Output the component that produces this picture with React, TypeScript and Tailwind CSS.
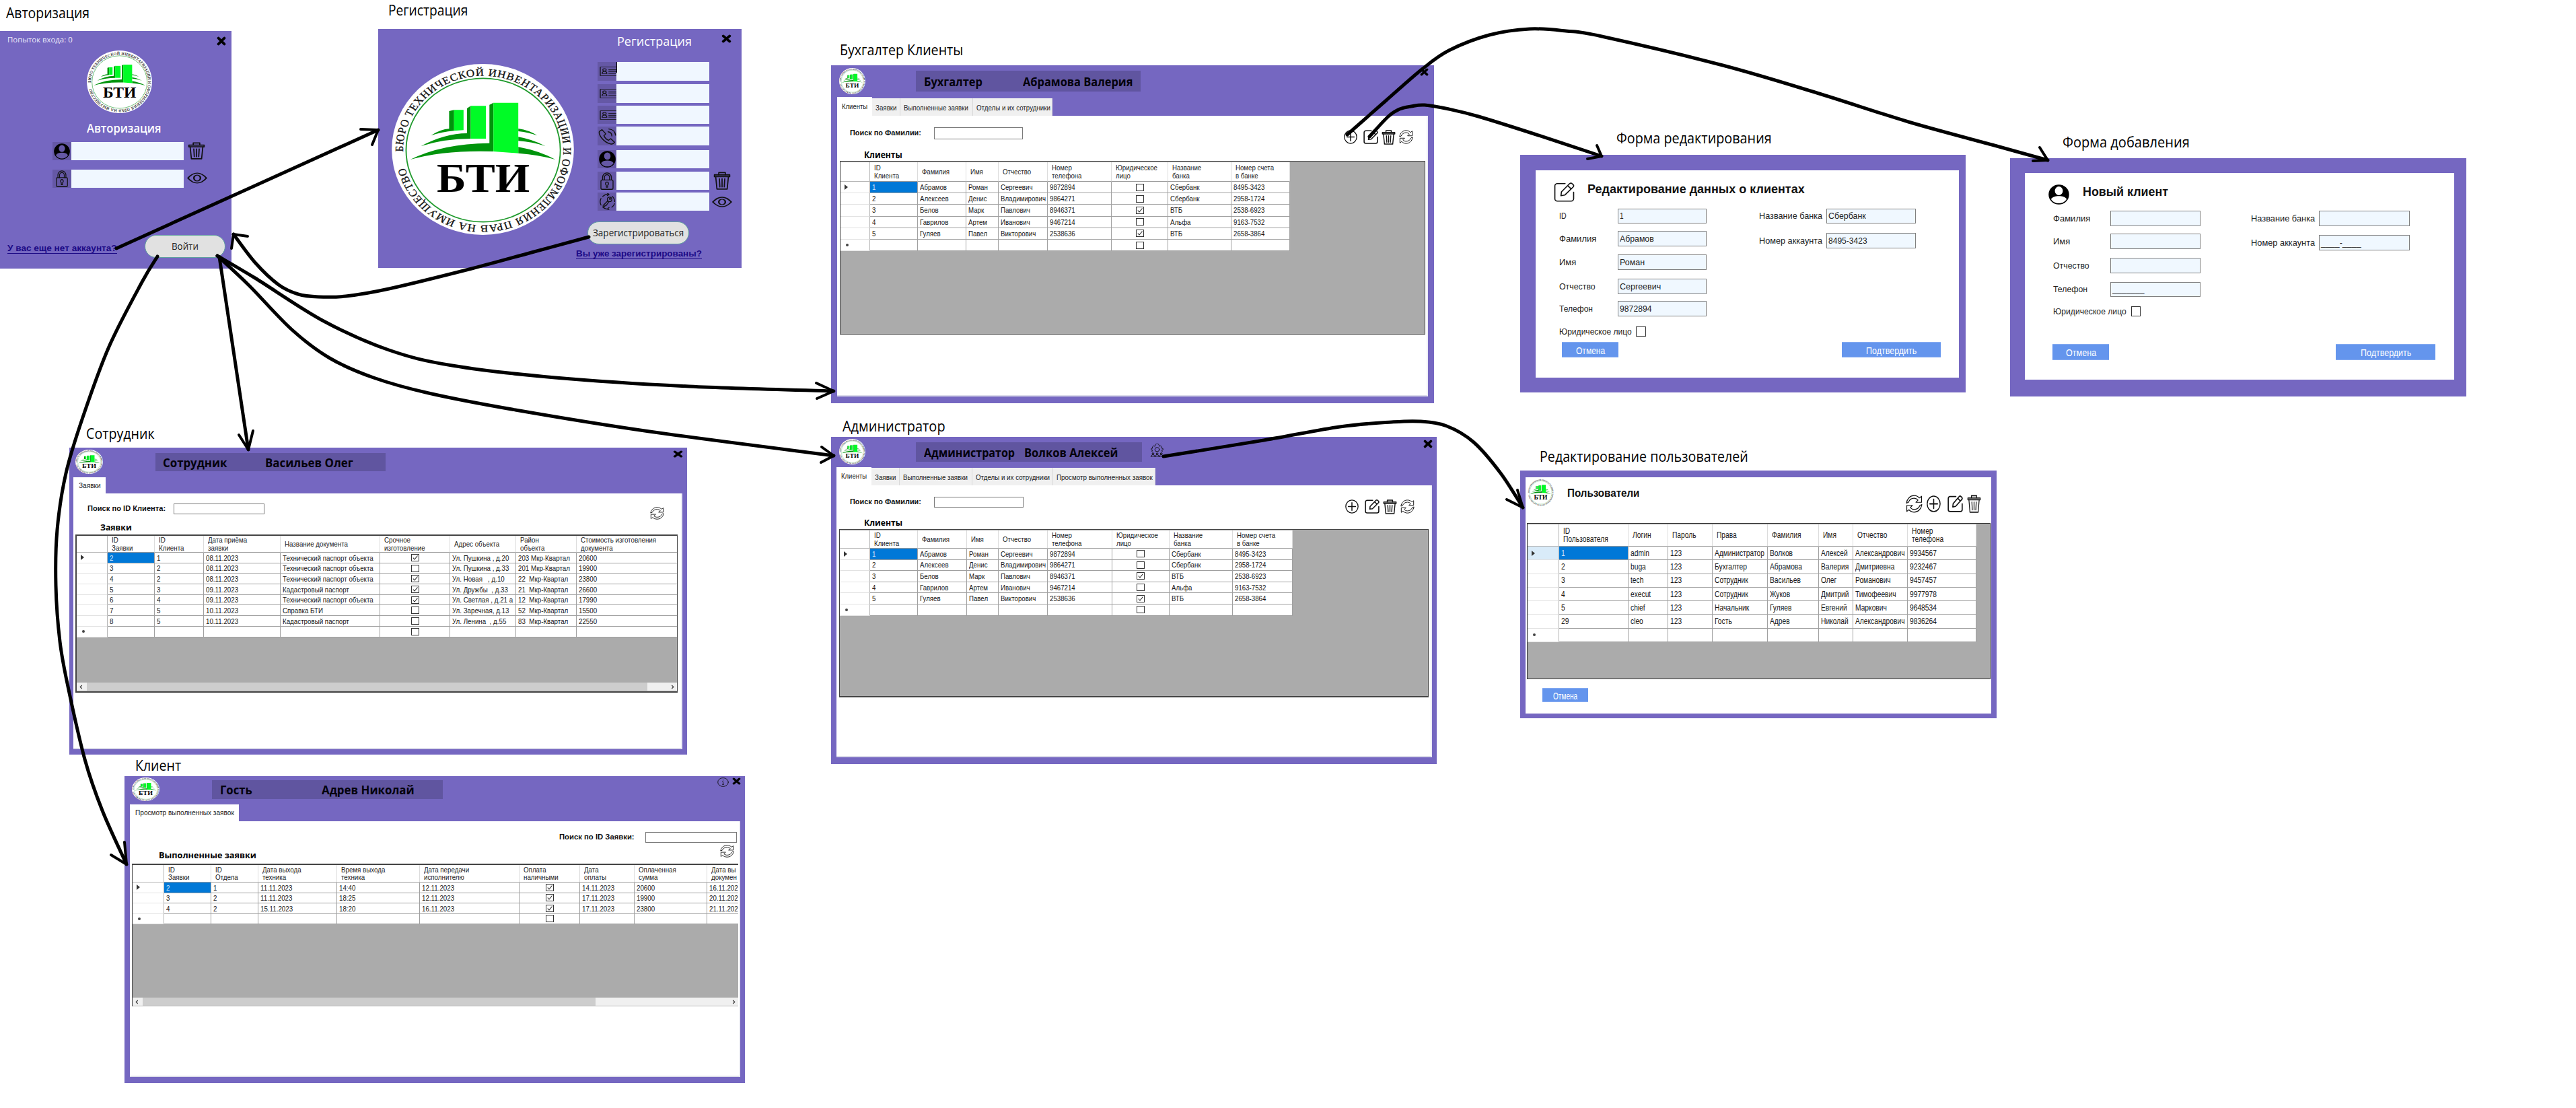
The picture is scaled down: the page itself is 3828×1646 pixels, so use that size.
import React, { useLayoutEffect, useRef, useState } from 'react';

/* ---------- text ---------- */

// Renders a line of text condensed or widened to an exact width.
function Fit({ w, className = '', children }: { w: number; className?: string; children: string }) {
  const ref = useRef<HTMLSpanElement>(null);
  const [scale, setScale] = useState(1);
  useLayoutEffect(() => {
    const el = ref.current;
    if (el && el.offsetWidth) setScale(w / el.offsetWidth);
  }, [w]);
  return (
    <span className={`block shrink-0 leading-none ${className}`} style={{ width: w }}>
      <span ref={ref} className="inline-block origin-left whitespace-pre" style={{ transform: `scaleX(${scale})` }}>
        {children}
      </span>
    </span>
  );
}

/* ---------- icons ---------- */

type IconProps = { className?: string; sw?: number };

const Svg = ({ className = '', sw = 1.6, children }: IconProps & { children: React.ReactNode }) => (
  <svg
    viewBox="0 0 24 24"
    preserveAspectRatio="none"
    fill="none"
    stroke="#111"
    strokeWidth={sw}
    strokeLinecap="round"
    strokeLinejoin="round"
    className={`block shrink-0 ${className}`}
  >
    {children}
  </svg>
);

const CloseIcon = ({ className }: IconProps) => (
  <Svg className={className} sw={6.5}>
    <path d="M4.500 4.500 19.500 19.500M19.500 4.500 4.500 19.500" stroke="#000" />
  </Svg>
);

const UserIcon = ({ className }: IconProps) => (
  <Svg className={className} sw={1.2}>
    <circle cx="12" cy="12" r="11.200" fill="#000" stroke="#000" />
    <ellipse cx="12" cy="7.600" rx="4.600" ry="5.200" fill="currentColor" stroke="none" />
    <path d="M3 17.400C5 14.600 8 13.800 12 13.800s7 .8 9 3.600c-2 3.400-5.200 5-9 5s-7-1.600-9-5z" fill="currentColor" stroke="none" />
  </Svg>
);

const LockIcon = ({ className }: IconProps) => (
  <Svg className={className} sw={1.3}>
    <rect x="3" y="10.500" width="18" height="12.800" rx="1.500" />
    <path d="M5.500 10.500V7a6.500 6.200 0 0 1 13 0v3.500M8.200 10.500V7a3.800 3.800 0 0 1 7.600 0v3.500" />
    <path d="M11 17.600a2.300 2.300 0 1 1 2 0v2.800h-2z" />
  </Svg>
);

const TrashIcon = ({ className, sw = 1.6, lid = 'none' }: IconProps & { lid?: string }) => (
  <Svg className={className} sw={sw}>
    <path d="M1.500 4.200h21v2.400h-21z" fill={lid} />
    <path d="M7.500 4V1.200h9V4M3.300 6.800 5 23h14l1.700-16.200M8.300 9.500l.7 10.500M12 9.500V20M15.700 9.500 15 20" />
  </Svg>
);

const EyeIcon = ({ className }: IconProps) => (
  <Svg className={className} sw={1.9}>
    <path d="M1 12C4.500 5 8 1.500 12 1.500S19.500 5 23 12c-3.500 7-7 10.500-11 10.500S4.500 19 1 12z" />
    <ellipse cx="12" cy="12" rx="3.900" ry="6.200" />
  </Svg>
);

const CardIcon = ({ className }: IconProps) => (
  <Svg className={className} sw={1.2}>
    <path d="M23.500 3.500H1v17h22.500" />
    <circle cx="7" cy="9" r="2.400" />
    <path d="M3.600 16.500c0-3 1.400-4.500 3.400-4.500s3.400 1.500 3.400 4.500zM13 9h10.500M13 12.500h10.500M13 16h10.500" />
  </Svg>
);

const PhoneIcon = ({ className }: IconProps) => (
  <Svg className={className} sw={1.3}>
    <path d="M5 2.500 1.500 5c-1.500 5 6 16 15 18 2 .3 4-.6 5-2.600l-5-5-3 2.300c-3.300-1.700-5-4-6-6.700L10 8.500z" />
    <path d="M13 5.500c3 .5 5 3 5 6M14 1.500c5 .5 8.500 4 9 9" />
  </Svg>
);

const KeyIcon = ({ className }: IconProps) => (
  <Svg className={className} sw={1.2}>
    <path d="M14 1.500A10.600 10.600 0 0 0 5.500 4.600M3 7.500A10.600 10.600 0 0 0 3 17M5.500 20a10.600 10.600 0 0 0 6 2.600M18.500 20a10.600 10.600 0 0 0 3.800-5M22.500 12a10.600 10.600 0 0 0-3.500-7.500M12 0l2.500 1.600L12 3.500M14.500 24 12 22.500l2.500-2" />
    <circle cx="15.200" cy="8.800" r="3.200" />
    <circle cx="15.800" cy="8.200" r=".8" />
    <path d="M12.800 10.800 6 17.500v1.800h2.500V17.500h2l3.800-5.300" />
  </Svg>
);

const PlusIcon = ({ className }: IconProps) => (
  <Svg className={className} sw={1.5}>
    <circle cx="12" cy="12" r="11" />
    <path d="M12 5.500v13M5.500 12h13" strokeWidth="1.800" />
  </Svg>
);

const EditIcon = ({ className, sw = 1.7 }: IconProps) => (
  <Svg className={className} sw={sw}>
    <path d="M13 1.500H4A2.800 2.800 0 0 0 1.200 4.300v15.800A2.800 2.800 0 0 0 4 22.900h16a2.800 2.800 0 0 0 2.800-2.800V12" />
    <path d="M18 1.700a2.300 2.300 0 0 1 3.200 0l.9.9a2.300 2.300 0 0 1 0 3.200L12.600 15.600l-4.400.8.600-4.800zM16 4l4 4" />
  </Svg>
);

const RefreshIcon = ({ className }: IconProps) => (
  <Svg className={className} sw={1.1}>
    <path d="M1 11C2 5 6.500 1 12 1c3 0 5.500 1.200 7.500 3.200L22.500 2v8h-8l3-3C16 5.500 14 4.600 12 4.600 8 4.600 5 7 3.800 10z" />
    <path d="M23 13c-1 6-5.500 10-11 10-3 0-5.500-1.200-7.500-3.200L1.500 22v-8h8l-3 3c1.500 1.500 3.500 2.400 5.500 2.400 4 0 7-2.400 8.200-5.400z" />
  </Svg>
);

const InfoIcon = ({ className }: IconProps) => (
  <Svg className={className} sw={1.4}>
    <circle cx="12" cy="12" r="11" />
    <path d="M12 6v1M10.500 10.500H12v7M10.500 17.500h3" />
  </Svg>
);

const TeamGearIcon = ({ className }: IconProps) => (
  <Svg className={className} sw={1.1}>
    <circle cx="12" cy="10.500" r="3.800" />
    <path d="M4.800 15.500 3 13.500l1.300-1.800-2.300-.7V9l2.300-.8L3.800 6l2-2 2.400.8L9 2l1.500-1.500h3L15 2l.8 2.800 2.400-.8 2 2-.5 2.200L22 9v2l-2.300.7L21 13.500l-1.800 2" />
    <circle cx="5" cy="18" r="1.500" />
    <circle cx="12" cy="18" r="1.500" />
    <circle cx="19" cy="18" r="1.500" />
    <path d="M1.500 23.500 3.500 20h3l2 3.500 2-3.500h3l2 3.500 2-3.500h3l2 3.500z" />
  </Svg>
);

const Logo = ({ className = '' }: { className?: string }) => (
  <svg viewBox="87 285 733 762" preserveAspectRatio="none" className={`block shrink-0 ${className}`}>
    <defs>
      <path id="ring" d="M133 676A322 333 0 0 1 777 666A322 333 0 0 1 133 676" />
    </defs>
    <ellipse cx="453.500" cy="666" rx="366" ry="381" fill="#fff" />
    <ellipse cx="455" cy="669" rx="310" ry="320" fill="none" stroke="#1f9a2c" strokeWidth="5" />
    <text fontFamily="Liberation Serif, serif" fontSize="46" fill="#111" stroke="#111" strokeWidth=".8">
      <textPath href="#ring" textLength="1985" lengthAdjust="spacing">
        БЮРО ТЕХНИЧЕСКОЙ ИНВЕНТАРИЗАЦИИ И ОФОРМЛЕНИЯ ПРАВ НА ИМУЩЕСТВО
      </textPath>
    </text>
    <g fill="#00940c">
      <path d="M245 604Q285 575 318 574V495L338 490V583Q290 588 245 604Z" />
      <path d="M205 651Q300 595 390 594V483L405 472V618Q300 618 205 651Z" />
      <path d="M162 711Q290 640 480 638V467L496 458V675Q300 668 162 711Z" />
      <path d="M596 655Q680 672 745 711Q680 690 596 683Z" />
      <path d="M596 610Q650 620 705 651Q650 632 596 628Z" />
      <path d="M596 573Q640 580 672 604Q640 590 596 585Z" />
    </g>
    <g fill="#00fb26">
      <path d="M338 490H376V580L338 583Z" />
      <path d="M405 472H466V618H405Z" />
      <path d="M496 458H596V683L496 675Z" />
    </g>
    <text x="268" y="856" fontFamily="Liberation Serif, serif" fontWeight="700" fontSize="181" textLength="374" lengthAdjust="spacingAndGlyphs">
      БТИ
    </text>
  </svg>
);

/* ---------- shared controls ---------- */

const Caption = ({ at, w, children }: { at: string; w: number; children: string }) => (
  <div className={`absolute ${at}`}>
    <Fit w={w} className="font-['Open_Sans'] text-[21px] text-black">
      {children}
    </Fit>
  </div>
);

const Check = ({ on, className = 'h-[11px] w-[12px]' }: { on?: boolean; className?: string }) => (
  <span className={`block shrink-0 border border-[#333] bg-white ${className}`}>
    {on && (
      <svg viewBox="0 0 10 9" className="block h-full w-full" fill="none" stroke="#222" strokeWidth="1.1">
        <path d="M1.800 4.500 4 7 8.500 1.500" />
      </svg>
    )}
  </span>
);

const FormButton = ({ className, w, children }: { className: string; w: number; children: string }) => (
  <button className={`flex items-center justify-center border-y border-[#86abf1] bg-[#6495ed] pt-[2px] text-[14px] text-white ${className}`}>
    <Fit w={w}>{children}</Fit>
  </button>
);

/* ---------- data grid ---------- */

type Cell = string | boolean;
type GridProps = {
  box: string;
  cols: string;
  headH: string;
  rowH: string;
  text: string;
  squeeze: string;
  inset: string;
  head: string[];
  rows: Cell[][];
  checkAt?: number;
  active?: string;
  bar?: string;
};

function DataGrid({ box, cols, headH, rowH, text, squeeze, inset, head, rows, checkAt = -1, active = 'bg-white', bar }: GridProps) {
  const blank: Cell[] = head.map((_, i) => (i === checkAt ? false : ''));
  return (
    <div className={`flex flex-col overflow-hidden bg-[#ababab] ${box}`}>
      <div className={`flex flex-col ${inset} ${text}`}>
        <div className={`grid shrink-0 ${cols} ${headH}`}>
          <div className="border-r border-b border-[#b5b5b5] bg-white" />
          {head.map((h, i) => (
            <div key={i} className="flex items-center border-r border-b border-r-[#dcdcdc] border-b-[#9a9a9a] bg-white pt-px pl-[6px] text-[#222]">
              <span className={`inline-block origin-left whitespace-pre leading-[11.500px] ${squeeze}`}>{h}</span>
            </div>
          ))}
        </div>
        {[...rows, blank].map((row, r) => (
          <div key={r} className={`grid shrink-0 ${cols} ${rowH}`}>
            <div className={`flex items-center border-r border-b border-r-[#b5b5b5] border-b-[#e2e2e2] pl-[6px] ${r === 0 ? active : 'bg-white'}`}>
              {r === 0 && <span className="block h-0 w-0 border-y-4 border-l-[5px] border-y-transparent border-l-[#333]" />}
              {r === rows.length && <span className="ml-0.5 block h-1 w-1 rounded-full bg-[#444]" />}
            </div>
            {row.map((c, i) => (
              <div
                key={i}
                className={`flex items-center border-r border-b border-[#a0a0a0] ${
                  r === 0 && i === 0 ? 'bg-[#0078d7] text-[#cfe6fb]' : 'bg-white text-[#161616]'
                } ${typeof c === 'boolean' ? 'justify-center' : 'pt-px pl-[3px]'}`}
              >
                {typeof c === 'boolean' ? (
                  <Check on={c} />
                ) : (
                  <span className={`inline-block origin-left whitespace-pre leading-none ${squeeze}`}>{c}</span>
                )}
              </div>
            ))}
          </div>
        ))}
      </div>
      {bar && (
        <div className="mt-auto flex h-[13px] shrink-0 items-center border-b border-[#bbb] bg-[#f0f0f0] px-1">
          <svg viewBox="0 0 6 8" className="block h-[7px] w-[5px]" fill="none" stroke="#444" strokeWidth="1.600">
            <path d="M4.500 1 1.500 4l3 3" />
          </svg>
          <span className={`ml-[6px] block h-full bg-[#cdcdcd] ${bar}`} />
          <svg viewBox="0 0 6 8" className="ml-auto block h-[7px] w-[5px]" fill="none" stroke="#444" strokeWidth="1.600">
            <path d="M1.500 1l3 3-3 3" />
          </svg>
        </div>
      )}
    </div>
  );
}

/* ---------- tabbed window ---------- */

type Tab = { label: string; box: string; w: number };
type WindowProps = {
  frame: string;
  headH: string;
  logo: string;
  bar: string;
  role: [string, number];
  roleBox: string;
  name: [string, number];
  badge?: React.ReactNode;
  controls: React.ReactNode;
  tabs: Tab[];
  tabsH: string;
  page: string;
  children: React.ReactNode;
};

const TabbedWindow = (p: WindowProps) => (
  <section className={`absolute flex flex-col bg-[#7567c1] font-['Liberation_Sans'] ${p.frame}`}>
    <header className={`flex shrink-0 items-start ${p.headH}`}>
      <Logo className={p.logo} />
      <div className={`flex shrink-0 items-center bg-[#6055a0] pt-px font-['Open_Sans'] text-[17px] font-bold text-[#04020c] ${p.bar}`}>
        <div className={`shrink-0 ${p.roleBox}`}>
          <Fit w={p.role[1]}>{p.role[0]}</Fit>
        </div>
        <Fit w={p.name[1]}>{p.name[0]}</Fit>
      </div>
      {p.badge}
      {p.controls}
    </header>
    <nav className={`flex shrink-0 items-end text-[11px] text-[#222] ${p.tabsH}`}>
      {p.tabs.map((t, i) => (
        <div
          key={t.label}
          className={`flex items-center ${t.box} ${i === 0 ? 'h-full bg-white' : 'h-[26px] border-r border-[#d9d9d9] bg-[#f0f0f0] pt-[2px]'}`}
        >
          <Fit w={t.w}>{t.label}</Fit>
        </div>
      ))}
    </nav>
    <div className={`flex flex-col border-r-2 border-b-2 border-r-[#eeeef6] border-b-[#dcdcea] bg-white ${p.page}`}>{p.children}</div>
  </section>
);

const SearchLabel = ({ w, children }: { w: number; children: string }) => (
  <Fit w={w} className="text-[11.500px] font-bold text-[#111]">
    {children}
  </Fit>
);

const inputBox = 'block shrink-0 border border-[#7a7a7a] bg-white';

const clientHead = ['ID\nКлиента', 'Фамилия', 'Имя', 'Отчество', 'Номер\nтелефона', 'Юридическое\nлицо', 'Название\nбанка', 'Номер счета\nв банке'];
const clients: Cell[][] = [
  ['1', 'Абрамов', 'Роман', 'Сергеевич', '9872894', false, 'Сбербанк', '8495-3423'],
  ['2', 'Алексеев', 'Денис', 'Владимирович', '9864271', false, 'Сбербанк', '2958-1724'],
  ['3', 'Белов', 'Марк', 'Павлович', '8946371', true, 'ВТБ', '2538-6923'],
  ['4', 'Гаврилов', 'Артем', 'Иванович', '9467214', false, 'Альфа', '9163-7532'],
  ['5', 'Гуляев', 'Павел', 'Викторович', '2538636', true, 'ВТБ', '2658-3864'],
];

const baseTabs: Tab[] = [
  { label: 'Клиенты', box: 'w-[52px] pl-[7px]', w: 38 },
  { label: 'Заявки', box: 'w-[42px] pl-[5px]', w: 32 },
  { label: 'Выполненные заявки', box: 'w-[108px] pl-[5px]', w: 96 },
  { label: 'Отделы и их сотрудники', box: 'w-[118px] pl-[5px]', w: 110 },
];

const ToolIcons = () => (
  <>
    <PlusIcon className="ml-auto h-[21px] w-[20px]" />
    <EditIcon className="ml-[9px] h-[21px] w-[22px]" />
    <TrashIcon lid="#aaa" className="ml-[5px] h-[22px] w-[21px]" />
    <RefreshIcon className="ml-[5px] h-[21px] w-[21px]" />
  </>
);

const AccountantWindow = () => (
  <TabbedWindow
    frame="left-[1235px] top-[97px] h-[502px] w-[896px]"
    headH="h-[47px]"
    logo="ml-[12px] mt-[4px] h-[39px] w-[39px]"
    bar="ml-[75px] mt-[8px] h-[31px] w-[334px]"
    role={['Бухгалтер', 87]}
    roleBox="w-[159px] pl-[12px]"
    name={['Абрамова Валерия', 163]}
    controls={<CloseIcon className="mt-[4px] mr-[8px] ml-auto h-[12px] w-[13px]" />}
    tabs={baseTabs}
    tabsH="ml-[9px] h-[28px]"
    page="ml-[9px] h-[417px] w-[878px]"
  >
    <div className="flex h-[51px] items-start pt-[17px] pr-[20px] pl-[19px]">
      <div className="flex h-[18px] items-center">
        <SearchLabel w={106}>Поиск по Фамилии:</SearchLabel>
        <span className={`ml-[19px] h-[18px] w-[132px] ${inputBox}`} />
      </div>
      <div className="ml-auto flex pt-1">
        <ToolIcons />
      </div>
    </div>
    <Fit w={57} className="ml-[40px] h-[16px] font-['Open_Sans'] text-[14px] font-bold">
      Клиенты
    </Fit>
    <DataGrid
      box="ml-[4px] h-[258px] w-[870px] border border-[#444]"
      inset="pt-px"
      cols="grid-cols-[44px_71px_72px_48px_73px_95px_84px_94px_87px]"
      headH="h-[29px]"
      rowH="h-[17.200px]"
      text="text-[11px]"
      squeeze="scale-x-[0.88]"
      head={clientHead}
      rows={clients}
      checkAt={5}
    />
  </TabbedWindow>
);

const AdminWindow = () => (
  <TabbedWindow
    frame="left-[1235px] top-[649px] h-[486px] w-[900px]"
    headH="h-[45px]"
    logo="ml-[12px] mt-[3px] h-[38px] w-[39px]"
    bar="ml-[75px] mt-[8px] h-[29px] w-[336px]"
    role={['Администратор', 135]}
    roleBox="w-[161px] pl-[12px]"
    name={['Волков Алексей', 139]}
    badge={<TeamGearIcon className="mt-[10px] ml-[12px] h-[20px] w-[21px]" />}
    controls={<CloseIcon className="mt-[4px] mr-[6px] ml-auto h-[13px] w-[14px]" />}
    tabs={[
      ...baseTabs.slice(0, 3),
      { label: 'Отделы и их сотрудники', box: 'w-[120px] pl-[5px]', w: 110 },
      { label: 'Просмотр выполненных заявок', box: 'w-[152px] pl-[5px]', w: 143 },
    ]}
    tabsH="ml-[8px] h-[27px]"
    page="ml-[8px] h-[404px] w-[885px]"
  >
    <div className="flex h-[49px] items-start pt-[17px] pr-[24px] pl-[20px]">
      <div className="flex h-[16px] items-center">
        <SearchLabel w={106}>Поиск по Фамилии:</SearchLabel>
        <span className={`ml-[19px] h-[16px] w-[133px] ${inputBox}`} />
      </div>
      <div className="ml-auto flex pt-1">
        <ToolIcons />
      </div>
    </div>
    <Fit w={57} className="ml-[41px] h-[16px] font-['Open_Sans'] text-[13px] font-bold">
      Клиенты
    </Fit>
    <DataGrid
      box="ml-[4px] h-[250px] w-[876px] border border-b-2 border-[#444]"
      inset="pt-px"
      cols="grid-cols-[45px_71px_73px_47px_73px_96px_85px_94px_89px]"
      headH="h-[27px]"
      rowH="h-[16.600px]"
      text="text-[11px]"
      squeeze="scale-x-[0.88]"
      head={clientHead}
      rows={clients}
      checkAt={5}
    />
  </TabbedWindow>
);

const EmployeeWindow = () => (
  <TabbedWindow
    frame="left-[103px] top-[665px] h-[456px] w-[918px]"
    headH="h-[44px]"
    logo="ml-[9px] mt-[3px] h-[36px] w-[41px]"
    bar="ml-[78px] mt-[8px] h-[27px] w-[342px]"
    role={['Сотрудник', 96]}
    roleBox="w-[163px] pl-[11px]"
    name={['Васильев Олег', 131]}
    controls={<CloseIcon className="mt-[4px] mr-[6px] ml-auto h-[11px] w-[15px]" />}
    tabs={[{ label: 'Заявки', box: 'w-[48px] pl-[8px]', w: 33 }]}
    tabsH="ml-[6px] h-[24px]"
    page="ml-[6px] h-[380px] w-[905px]"
  >
    <div className="flex h-[45px] items-start pt-[15px] pr-[25px] pl-[21px]">
      <div className="flex h-[16px] items-center">
        <SearchLabel w={116}>Поиск по ID Клиента:</SearchLabel>
        <span className={`ml-[12px] h-[16px] w-[135px] ${inputBox}`} />
      </div>
      <RefreshIcon className="mt-[5px] ml-auto h-[19px] w-[21px]" />
    </div>
    <Fit w={47} className="ml-[40px] h-[16px] font-['Open_Sans'] text-[12px] font-bold">
      Заявки
    </Fit>
    <DataGrid
      box="ml-[3px] h-[235px] w-[895px] border-2 border-r border-[#444]"
      inset=""
      cols="grid-cols-[46px_70px_73px_114px_148px_104px_98px_90px_150px]"
      headH="h-[25px]"
      rowH="h-[15.700px]"
      text="text-[10.500px]"
      squeeze="scale-x-[0.93]"
      head={['ID\nЗаявки', 'ID\nКлиента', 'Дата приёма\nзаявки', 'Название документа', 'Срочное\nизготовление', 'Адрес объекта', 'Район\nобъекта', 'Стоимость изготовления\nдокумента']}
      rows={[
        ['2', '1', '08.11.2023', 'Технический паспорт объекта', true, 'Ул. Пушкина , д.20', '203 Мкр-Квартал', '20600'],
        ['3', '2', '08.11.2023', 'Технический паспорт объекта', false, 'Ул. Пушкина , д.33', '201 Мкр-Квартал', '19900'],
        ['4', '2', '08.11.2023', 'Технический паспорт объекта', true, 'Ул. Новая   , д.10', '22  Мкр-Квартал', '23800'],
        ['5', '3', '09.11.2023', 'Кадастровый паспорт', true, 'Ул. Дружбы  , д.33', '21  Мкр-Квартал', '26600'],
        ['6', '4', '09.11.2023', 'Технический паспорт объекта', true, 'Ул. Светлая , д.21 а', '12  Мкр-Квартал', '17990'],
        ['7', '5', '10.11.2023', 'Справка БТИ', false, 'Ул. Заречная, д.13', '52  Мкр-Квартал', '15500'],
        ['8', '5', '10.11.2023', 'Кадастровый паспорт', false, 'Ул. Ленина  , д.55', '83  Мкр-Квартал', '22550'],
      ]}
      checkAt={4}
      bar="w-[833px]"
    />
  </TabbedWindow>
);

const GuestWindow = () => (
  <TabbedWindow
    frame="left-[185px] top-[1153px] h-[456px] w-[922px]"
    headH="h-[42px]"
    logo="ml-[11px] mt-[2px] h-[35px] w-[41px]"
    bar="ml-[78px] mt-[6px] h-[28px] w-[343px]"
    role={['Гость', 48]}
    roleBox="w-[163px] pl-[12px]"
    name={['Адрев Николай', 138]}
    controls={
      <div className="mr-[6px] ml-auto flex gap-[5px] pt-[2px]">
        <InfoIcon className="h-[14px] w-[17px]" />
        <CloseIcon className="h-[11px] w-[13px]" />
      </div>
    }
    tabs={[{ label: 'Просмотр выполненных заявок', box: 'w-[162px] pl-[8px]', w: 147 }]}
    tabsH="ml-[8px] h-[25px]"
    page="ml-[8px] h-[380px] w-[907px]"
  >
    <div className="flex h-[35px] items-start justify-end pt-[16px] pr-[3px]">
      <div className="flex h-[16px] items-center">
        <SearchLabel w={112}>Поиск по ID Заявки:</SearchLabel>
        <span className={`ml-[16px] h-[16px] w-[136px] ${inputBox}`} />
      </div>
    </div>
    <div className="flex h-[28px] items-start justify-between pr-[7px] pl-[43px]">
      <Fit w={145} className="pt-[10px] font-['Open_Sans'] text-[12.500px] font-bold">
        Выполненные заявки
      </Fit>
      <RefreshIcon className="h-[19px] w-[21px]" />
    </div>
    <DataGrid
      box="ml-[3px] h-[212px] w-[901px] border-t-2 border-l border-[#444]"
      inset=""
      cols="grid-cols-[47px_70px_70px_117px_123px_148px_90px_81px_108px_80px]"
      headH="h-[26px]"
      rowH="h-[15.500px]"
      text="text-[10.500px]"
      squeeze="scale-x-[0.93]"
      head={['ID\nЗаявки', 'ID\nОтдела', 'Дата выхода\nтехника', 'Время выхода\nтехника', 'Дата передачи\nисполнителю', 'Оплата\nналичными', 'Дата\nоплаты', 'Оплаченная\nсумма', 'Дата вы\nдокумен']}
      rows={[
        ['2', '1', '11.11.2023', '14:40', '12.11.2023', true, '14.11.2023', '20600', '16.11.202'],
        ['3', '2', '11.11.2023', '18:25', '12.11.2023', true, '17.11.2023', '19900', '20.11.202'],
        ['4', '2', '15.11.2023', '18:20', '16.11.2023', true, '17.11.2023', '23800', '21.11.202'],
      ]}
      checkAt={5}
      bar="w-[673px]"
    />
  </TabbedWindow>
);

/* ---------- sign-in and registration ---------- */

const Underlined = ({ w, className, children }: { w: number; className: string; children: string }) => (
  <a className={`block border-b border-[#1c0a86] pb-px font-['Liberation_Sans'] text-[12px] font-bold text-[#1c0a86] ${className}`}>
    <Fit w={w}>{children}</Fit>
  </a>
);

const PillButton = ({ w, className, children }: { w: number; className: string; children: string }) => (
  <button className={`flex shrink-0 items-center justify-center rounded-[20px] border border-[#5fa09f] bg-[#e1e1e1] font-['Open_Sans'] text-[#222] ${className}`}>
    <Fit w={w}>{children}</Fit>
  </button>
);

const IconTile = ({ className, children }: { className: string; children: React.ReactNode }) => (
  <span className={`flex shrink-0 items-center justify-center bg-[#6558a6] text-[#6558a6] ${className}`}>{children}</span>
);

const SignIn = () => (
  <section className="absolute top-[46px] left-0 flex h-[353px] w-[344px] flex-col bg-[#7567c1] font-['Open_Sans']">
    <div className="flex h-[29px] items-start justify-between pr-[8px] pl-[11px]">
      <Fit w={97} className="pt-[7px] text-[11.500px] text-[#efecfb]">
        Попыток входа: 0
      </Fit>
      <CloseIcon className="mt-[8px] h-[14px] w-[14px]" />
    </div>
    <Logo className="ml-[129px] h-[93px] w-[97px]" />
    <Fit w={111} className="mt-[13px] ml-[129px] h-[30px] text-[18px] font-semibold text-white">
      Авторизация
    </Fit>
    <div className="flex h-[27px] items-stretch pl-[78px]">
      <IconTile className="w-[28px]">
        <UserIcon className="h-[24px] w-[24px]" />
      </IconTile>
      <span className="block w-[167px] bg-[#f0f7ff]" />
      <TrashIcon className="ml-[6px] h-[26px] w-[26px]" />
    </div>
    <div className="mt-[14px] flex h-[27px] items-stretch pl-[78px]">
      <IconTile className="w-[28px]">
        <LockIcon className="h-[25px] w-[22px]" />
      </IconTile>
      <span className="block w-[167px] bg-[#f0f7ff]" />
      <EyeIcon className="mt-[4px] ml-[5px] h-[17px] w-[30px]" />
    </div>
    <div className="mt-[70px] flex items-start pl-[11px]">
      <Underlined w={163} className="mt-[14px]">
        У вас еще нет аккаунта?
      </Underlined>
      <PillButton w={40} className="ml-[41px] h-[34px] w-[120px] text-[14px]">
        Войти
      </PillButton>
    </div>
  </section>
);

const registerFields: { icon: React.ReactNode; box: string; tail?: React.ReactNode }[] = [
  { icon: <CardIcon className="ml-[2px] h-[18px] w-[25px]" />, box: 'h-[28px]' },
  { icon: <CardIcon className="ml-[2px] h-[18px] w-[25px]" />, box: 'mt-[5px] h-[28px]' },
  { icon: <CardIcon className="ml-[2px] h-[18px] w-[25px]" />, box: 'mt-[4px] h-[27px]' },
  { icon: <PhoneIcon className="h-[25px] w-[27px]" />, box: 'mt-[4px] h-[28px]' },
  { icon: <UserIcon className="h-[25px] w-[25px]" />, box: 'mt-[7px] h-[27px]' },
  { icon: <LockIcon className="h-[26px] w-[24px]" />, box: 'mt-[5px] h-[27px]', tail: <TrashIcon className="ml-[6px] h-[27px] w-[26px]" /> },
  { icon: <KeyIcon className="h-[25px] w-[25px]" />, box: 'mt-[4px] h-[27px]', tail: <EyeIcon className="mt-[6px] ml-[4px] h-[16px] w-[30px]" /> },
];

const Register = () => (
  <section className="absolute top-[43px] left-[562px] flex h-[355px] w-[540px] items-start bg-[#7567c1] font-['Open_Sans']">
    <Logo className="mt-[52px] ml-[20px] h-[254px] w-[271px]" />
    <div className="flex flex-1 flex-col">
      <div className="flex h-[49px] items-start justify-between pr-[15px] pl-[64px]">
        <Fit w={111} className="pt-[9px] text-[18.500px] text-white">
          Регистрация
        </Fit>
        <CloseIcon className="mt-[8px] h-[13px] w-[15px]" />
      </div>
      {registerFields.map((f, i) => (
        <div key={i} className={`flex shrink-0 pl-[35px] ${f.box}`}>
          <IconTile className="w-[28px]">{f.icon}</IconTile>
          <span className="flex w-[138px] shrink-0 bg-[#f0f7ff]">{i === 0 && <span className="block h-[16px] w-px bg-black" />}</span>
          {f.tail}
        </div>
      ))}
      <PillButton w={135} className="mt-[16px] ml-[20px] h-[34px] w-[151px] text-[14px]">
        Зарегистрироваться
      </PillButton>
      <Underlined w={187} className="mt-[8px] ml-[3px] self-start">
        Вы уже зарегистрированы?
      </Underlined>
    </div>
  </section>
);

/* ---------- client forms ---------- */

type Field = { label: string; lw: number; row: string; value?: string; vw?: number; low?: boolean };

const FieldRow = ({ f, labelBox, inputW }: { f: Field; labelBox: string; inputW: string }) => (
  <label className={`flex shrink-0 items-center ${f.row}`}>
    <span className={`shrink-0 text-[13.500px] text-[#222] ${labelBox}`}>
      <Fit w={f.lw}>{f.label}</Fit>
    </span>
    <span className={`flex h-full shrink-0 border border-[#808080] bg-[#f0f8ff] pl-[2px] text-[13.500px] text-[#222] ${f.low ? 'items-end pb-[4px]' : 'items-center'} ${inputW}`}>
      {f.value && <Fit w={f.vw ?? 50}>{f.value}</Fit>}
    </span>
  </label>
);

const EditForm = () => (
  <section className="absolute top-[230px] left-[2259px] flex h-[353px] w-[662px] flex-col bg-[#7567c1] pt-[23px] pl-[23px] font-['Liberation_Sans']">
    <div className="flex h-[308px] w-[629px] flex-col bg-white pt-[18px] pl-[27px]">
      <div className="flex h-[38px] items-start">
        <EditIcon sw={1.3} className="h-[29px] w-[31px]" />
        <Fit w={323} className="mt-[1px] ml-[19px] text-[18px] font-bold text-[#111]">
          Редактирование данных о клиентах
        </Fit>
      </div>
      <div className="flex h-[160px] items-start pl-[8px]">
        <div className="flex flex-col">
          {[
            { label: 'ID', lw: 11, row: 'mt-[1px] h-[22px]', value: '1', vw: 6 },
            { label: 'Фамилия', lw: 55, row: 'mt-[11px] h-[23px]', value: 'Абрамов', vw: 51 },
            { label: 'Имя', lw: 25, row: 'mt-[12px] h-[23px]', value: 'Роман', vw: 37 },
            { label: 'Отчество', lw: 54, row: 'mt-[13px] h-[23px]', value: 'Сергеевич', vw: 61 },
            { label: 'Телефон', lw: 50, row: 'mt-[10px] h-[23px]', value: '9872894', vw: 48 },
          ].map((f) => (
            <FieldRow key={f.label} f={f} labelBox="w-[87px]" inputW="w-[132px]" />
          ))}
        </div>
        <div className="ml-[77px] flex flex-col">
          {[
            { label: 'Название банка', lw: 94, row: 'mt-[1px] h-[22px]', value: 'Сбербанк', vw: 56 },
            { label: 'Номер аккаунта', lw: 94, row: 'mt-[14px] h-[23px]', value: '8495-3423', vw: 58 },
          ].map((f) => (
            <FieldRow key={f.label} f={f} labelBox="w-[101px] pl-px" inputW="w-[133px]" />
          ))}
        </div>
      </div>
      <div className="mt-[16px] flex h-[15px] items-center pl-[8px] text-[13.500px] text-[#222]">
        <Fit w={108}>Юридическое лицо</Fit>
        <Check className="ml-[6px] h-[15px] w-[15px]" />
      </div>
      <div className="mt-[8px] flex justify-between pr-[27px] pl-[12px]">
        <FormButton className="h-[23px] w-[84px]" w={43}>Отмена</FormButton>
        <FormButton className="h-[23px] w-[147px]" w={75}>Подтвердить</FormButton>
      </div>
    </div>
  </section>
);

const AddForm = () => (
  <section className="absolute top-[235px] left-[2987px] flex h-[354px] w-[678px] flex-col bg-[#7567c1] pt-[22px] pl-[22px] font-['Liberation_Sans']">
    <div className="flex h-[307px] w-[638px] flex-col bg-white pt-[17px] pl-[35px]">
      <div className="flex h-[39px] items-start text-white">
        <UserIcon className="h-[30px] w-[31px]" />
        <Fit w={127} className="mt-[2px] ml-[20px] text-[18px] font-bold text-[#111]">
          Новый клиент
        </Fit>
      </div>
      <div className="flex h-[128px] items-start pl-[7px]">
        <div className="flex flex-col">
          {[
            { label: 'Фамилия', lw: 55, row: 'h-[23px]' },
            { label: 'Имя', lw: 25, row: 'mt-[11px] h-[23px]' },
            { label: 'Отчество', lw: 54, row: 'mt-[13px] h-[23px]' },
            { label: 'Телефон', lw: 51, row: 'mt-[13px] h-[22px]', value: '_______', vw: 48, low: true },
          ].map((f) => (
            <FieldRow key={f.label} f={f} labelBox="w-[85px]" inputW="w-[134px]" />
          ))}
        </div>
        <div className="ml-[74px] flex flex-col">
          {[
            { label: 'Название банка', lw: 95, row: 'h-[23px]' },
            { label: 'Номер аккаунта', lw: 95, row: 'mt-[13px] h-[23px]', value: '____-____', vw: 60, low: true },
          ].map((f) => (
            <FieldRow key={f.label} f={f} labelBox="w-[102px] pl-px" inputW="w-[135px]" />
          ))}
        </div>
      </div>
      <div className="mt-[14px] flex h-[15px] items-center pl-[7px] text-[13.500px] text-[#222]">
        <Fit w={109}>Юридическое лицо</Fit>
        <Check className="ml-[7px] h-[15px] w-[14px]" />
      </div>
      <div className="mt-[41px] flex justify-between pr-[28px] pl-[6px]">
        <FormButton className="h-[24px] w-[84px]" w={45}>Отмена</FormButton>
        <FormButton className="h-[24px] w-[148px]" w={75}>Подтвердить</FormButton>
      </div>
    </div>
  </section>
);

const UsersWindow = () => (
  <section className="absolute top-[699px] left-[2259px] flex h-[368px] w-[708px] flex-col bg-[#7567c1] pt-[10px] pl-[8px] font-['Liberation_Sans']">
    <div className="flex h-[351px] w-[692px] flex-col bg-white">
      <div className="flex h-[68px] items-start pr-[15px]">
        <Logo className="mt-[2px] ml-[3px] h-[41px] w-[39px]" />
        <Fit w={107} className="mt-[16px] ml-[20px] text-[16px] font-bold text-[#111]">
          Пользователи
        </Fit>
        <div className="ml-auto flex items-start pt-[26px]">
          <RefreshIcon className="h-[27px] w-[25px]" />
          <PlusIcon className="mt-px ml-[6px] h-[25px] w-[21px]" />
          <EditIcon className="mt-px ml-[10px] h-[25px] w-[23px]" />
          <TrashIcon sw={1.4} lid="#aaa" className="ml-[6px] h-[27px] w-[21px]" />
        </div>
      </div>
      <DataGrid
        box="ml-[2px] h-[232px] w-[689px] border border-[#333]"
        inset="pt-px"
        cols="grid-cols-[47px_103px_59px_66px_82px_76px_51px_81px_102px]"
        headH="h-[33px]"
        rowH="h-[20.300px]"
        text="text-[12.500px]"
        squeeze="scale-x-[0.82]"
        active="bg-[#d9ebf9]"
        head={['ID\nПользователя', 'Логин', 'Пароль', 'Права', 'Фамилия', 'Имя', 'Отчество', 'Номер\nтелефона']}
        rows={[
          ['1', 'admin', '123', 'Администратор', 'Волков', 'Алексей', 'Александрович', '9934567'],
          ['2', 'buga', '123', 'Бухгалтер', 'Абрамова', 'Валерия', 'Дмитриевна', '9232467'],
          ['3', 'tech', '123', 'Сотрудник', 'Васильев', 'Олег', 'Романович', '9457457'],
          ['4', 'execut', '123', 'Сотрудник', 'Жуков', 'Дмитрий', 'Тимофеевич', '9977978'],
          ['5', 'chief', '123', 'Начальник', 'Гуляев', 'Евгений', 'Маркович', '9648534'],
          ['29', 'cleo', '123', 'Гость', 'Адрев', 'Николай', 'Александрович', '9836264'],
        ]}
      />
      <FormButton className="mt-[13px] ml-[25px] h-[21px] w-[68px]" w={36}>Отмена</FormButton>
    </div>
  </section>
);

/* ---------- connectors ---------- */

type Pt = [number, number];

// Smooth curve through every point (Catmull-Rom converted to cubic segments).
const smooth = (p: Pt[]) => {
  let d = `M${p[0][0]} ${p[0][1]}`;
  for (let i = 0; i < p.length - 1; i++) {
    const a = p[Math.max(i - 1, 0)];
    const b = p[i];
    const c = p[i + 1];
    const e = p[Math.min(i + 2, p.length - 1)];
    d += `C${b[0] + (c[0] - a[0]) / 6} ${b[1] + (c[1] - a[1]) / 6} ${c[0] - (e[0] - b[0]) / 6} ${c[1] - (e[1] - b[1]) / 6} ${c[0]} ${c[1]}`;
  }
  return d;
};

const arrows: { line: Pt[]; head: [Pt, Pt] }[] = [
  { line: [[173, 369], [562, 193]], head: [[536, 192], [553, 215]] },
  { line: [[875, 352], [790, 375], [701, 399], [578, 429], [514, 440], [473, 441], [443, 437], [414, 423], [379, 390], [347, 348]], head: [[344, 369], [368, 351]] },
  { line: [[323, 380], [379, 413], [481, 477], [578, 520], [672, 543], [825, 561], [1024, 574], [1239, 581]], head: [[1213, 569], [1214, 592]] },
  { line: [[323, 380], [370, 424], [434, 490], [490, 532], [555, 561], [637, 584], [766, 609], [965, 641], [1239, 677]], head: [[1221, 664], [1220, 687]] },
  { line: [[326, 382], [369, 668]], head: [[355, 646], [376, 640]] },
  { line: [[234, 381], [211, 419], [162, 515], [123, 620], [98, 703], [85, 787], [83, 870], [89, 953], [101, 1020], [126, 1128], [152, 1204], [188, 1284]], head: [[165, 1270], [185, 1251]] },
  { line: [[2002, 200], [2060, 149], [2113, 103], [2153, 75], [2213, 52], [2273, 43], [2327, 46], [2380, 54], [2560, 97], [2700, 138], [2836, 181], [2960, 215], [3043, 238]], head: [[3021, 239], [3031, 219]] },
  { line: [[2035, 203], [2063, 173], [2080, 162], [2097, 158], [2117, 156], [2153, 162], [2197, 173], [2280, 199], [2380, 232]], head: [[2359, 236], [2373, 216]] },
  { line: [[1729, 678], [1878, 654], [1991, 634], [2068, 627], [2110, 626], [2150, 633], [2190, 657], [2230, 703], [2263, 754]], head: [[2239, 742], [2255, 728]] },
];

const Connectors = () => (
  <svg viewBox="0 0 3828 1646" className="pointer-events-none absolute inset-0 h-full w-full" fill="none" stroke="#000" strokeLinecap="round" strokeLinejoin="round">
    {arrows.map(({ line, head }, i) => {
      const tip = line[line.length - 1];
      return (
        <g key={i}>
          <path d={smooth(line)} strokeWidth="5" />
          <path d={`M${head[0][0]} ${head[0][1]}L${tip[0]} ${tip[1]}L${head[1][0]} ${head[1][1]}`} strokeWidth="4" />
        </g>
      );
    })}
  </svg>
);

export default function App() {
  return (
    <main className="relative h-[1646px] w-[3828px] overflow-hidden bg-white">
      <Caption at="left-[9px] top-[9px]" w={124}>Авторизация</Caption>
      <Caption at="left-[577px] top-[5px]" w={118}>Регистрация</Caption>
      <Caption at="left-[1248px] top-[64px]" w={183}>Бухгалтер Клиенты</Caption>
      <Caption at="left-[2402px] top-[195px]" w={231}>Форма редактирования</Caption>
      <Caption at="left-[3065px] top-[201px]" w={189}>Форма добавления</Caption>
      <Caption at="left-[128px] top-[634px]" w={102}>Сотрудник</Caption>
      <Caption at="left-[201px] top-[1127px]" w={68}>Клиент</Caption>
      <Caption at="left-[1252px] top-[623px]" w={153}>Администратор</Caption>
      <Caption at="left-[2288px] top-[668px]" w={310}>Редактирование пользователей</Caption>

      <SignIn />
      <Register />
      <AccountantWindow />
      <EditForm />
      <AddForm />
      <EmployeeWindow />
      <AdminWindow />
      <UsersWindow />
      <GuestWindow />
      <Connectors />
    </main>
  );
}
